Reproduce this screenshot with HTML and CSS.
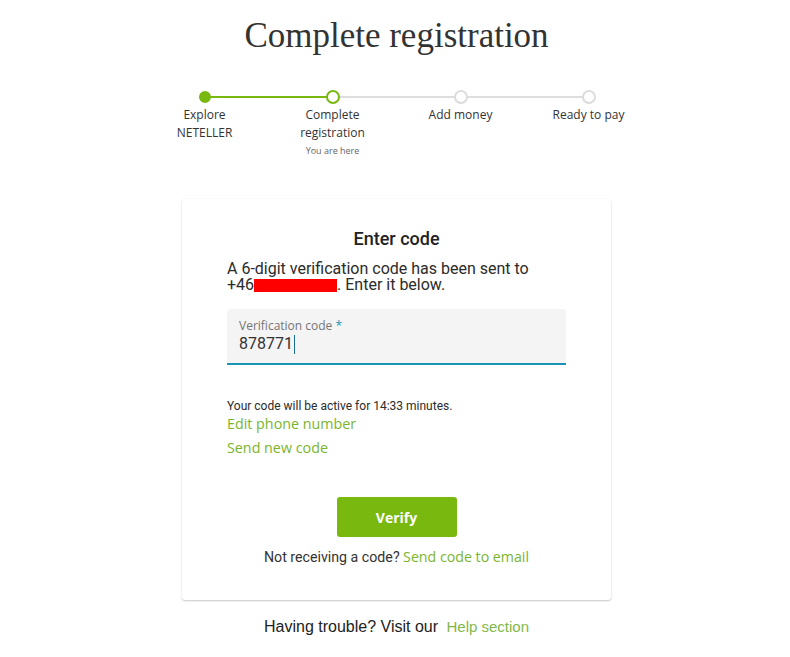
FILE: index.html
```html
<!DOCTYPE html>
<html lang="en">
<head>
<meta charset="utf-8">
<title>Complete registration</title>
<link rel="stylesheet" href="styles.css">
</head>
<body>
<main class="page">
  <h1 class="title">Complete registration</h1>

  <ol class="stepper">
    <li class="step done">
      <span class="dot"></span>
      <span class="label">Explore<br>NETELLER</span>
    </li>
    <li class="step current">
      <span class="dot"></span>
      <span class="label">Complete<br>registration</span>
      <span class="here">You are here</span>
    </li>
    <li class="step">
      <span class="dot"></span>
      <span class="label">Add money</span>
    </li>
    <li class="step">
      <span class="dot"></span>
      <span class="label">Ready to pay</span>
    </li>
  </ol>

  <section class="card">
    <h2 class="card-title">Enter code</h2>
    <p class="intro"><span class="line">A 6-digit verification code has been sent to</span><span class="line">+46<span class="redact"></span>. Enter it below.</span></p>

    <div class="field">
      <span class="field-label">Verification code <span class="req">*</span></span>
      <span class="field-value">878771<span class="caret"></span></span>
    </div>

    <p class="timer">Your code will be active for 14:33 minutes.</p>
    <a class="link edit" href="#">Edit phone number</a>
    <a class="link resend" href="#">Send new code</a>

    <div class="actions">
      <button class="btn" type="button">Verify</button>
      <p class="alt">Not receiving a code? <a class="link" href="#">Send code to email</a></p>
    </div>
  </section>

  <p class="help">Having trouble? Visit our <a href="#" class="help-link">Help section</a></p>
</main>
</body>
</html>
```

FILE: styles.css
```css
* { box-sizing: border-box; }

body {
  margin: 0;
  background: #ffffff;
  color: #2b2b2b;
  font-family: "Open Sans", sans-serif;
}

.page {
  display: flex;
  flex-direction: column;
  align-items: center;
  padding-top: 14px;
  padding-left: 3px;
}

.title {
  margin: 0;
  font-family: "Liberation Serif", serif;
  font-weight: normal;
  font-size: 35px;
  line-height: 44px;
  color: #333;
}

.stepper {
  list-style: none;
  margin: 32px 0 0 0;
  padding: 0;
  display: flex;
  width: 512px;
}

.step {
  width: 128px;
  display: flex;
  flex-direction: column;
  align-items: center;
  position: relative;
}

.step::before {
  content: "";
  position: absolute;
  top: 6px;
  left: 64px;
  width: 128px;
  height: 2px;
  background: #dedede;
}
.step:last-child::before { display: none; }
.step.done::before { background: #78b80f; }

.dot {
  width: 14px;
  height: 14px;
  border-radius: 50%;
  border: 2px solid #dcdcdc;
  background: #fff;
  position: relative;
  z-index: 1;
}
.done .dot {
  background: #78b80f;
  border-color: #78b80f;
  width: 12px;
  height: 12px;
  margin: 1px 0;
}
.current .dot { border-color: #78b80f; }

.label {
  margin-top: 2px;
  font-size: 12px;
  line-height: 18px;
  color: #333;
  text-align: center;
}

.here {
  font-size: 9px;
  line-height: 15px;
  margin-top: 1px;
  color: #666;
}

.card {
  margin-top: 41px;
  width: 429px;
  background: #fff;
  border-radius: 3px;
  box-shadow: 0 1px 2px rgba(0,0,0,0.22), 0 0 1px rgba(0,0,0,0.06);
  padding: 30px 45px 34px;
  display: flex;
  flex-direction: column;
  font-family: Roboto, sans-serif;
}

.card-title {
  margin: 0;
  text-align: center;
  font-size: 18px;
  font-weight: 500;
  line-height: 20px;
  color: #222;
}

.intro {
  margin: 12px 0 0 0;
  font-size: 16px;
  color: #2b2b2b;
  display: flex;
  flex-direction: column;
}
.line {
  display: block;
  height: 16px;
  line-height: 16px;
}

.redact {
  display: inline-block;
  width: 83px;
  height: 13px;
  background: #ff0000;
  vertical-align: -2px;
}

.field {
  margin-top: 16px;
  height: 56px;
  background: #f4f4f4;
  border-bottom: 2px solid #1b93b3;
  border-radius: 3px 3px 0 0;
  padding: 9px 12px 0;
  display: flex;
  flex-direction: column;
}

.field-label {
  font-family: "Open Sans", sans-serif;
  font-size: 12px;
  line-height: 16px;
  color: #757575;
}
.req { color: #1b93b3; }

.field-value {
  font-size: 16px;
  line-height: 20px;
  color: #333;
  display: flex;
  align-items: center;
}
.caret {
  display: inline-block;
  width: 1px;
  height: 19px;
  background: #1b6f8a;
  margin-left: 1px;
}

.timer {
  margin: 33px 0 0 0;
  font-size: 12px;
  line-height: 16px;
  color: #2b2b2b;
}

.link {
  font-family: "Open Sans", sans-serif;
  color: #7ab52d;
  text-decoration: none;
}
.edit, .resend {
  font-size: 14.3px;
  line-height: 20px;
  align-self: flex-start;
}
.edit { margin-top: 0; }
.resend { margin-top: 4px; }

.actions {
  margin-top: 39px;
  display: flex;
  flex-direction: column;
  align-items: center;
}

.btn {
  width: 120px;
  height: 40px;
  border: 0;
  border-radius: 3px;
  background: #78b80f;
  color: #fff;
  font-family: "Open Sans", sans-serif;
  font-weight: 700;
  font-size: 14px;
}

.alt {
  margin: 11px 0 0 0;
  font-size: 14.2px;
  line-height: 18px;
  color: #333;
}

.help {
  margin: 18px 0 0 0;
  font-family: "Liberation Sans", Arial, sans-serif;
  font-size: 16px;
  line-height: 18px;
  color: #222;
}
.help-link {
  margin-left: 4px;
  font-size: 15px;
  color: #82b84a;
  text-decoration: none;
}
```
